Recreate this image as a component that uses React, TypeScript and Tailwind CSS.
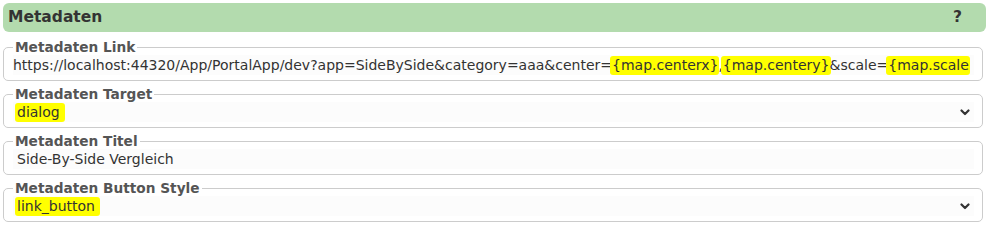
import React from "react";

const Hl = ({ children, wide }: { children: React.ReactNode; wide?: boolean }) => (
  <span className={`inline-block bg-[#ffff00] rounded-[3px] leading-[19px] pl-[2px] -ml-[2px] ${wide ? "pr-[5px]" : "pr-[1px] -mr-[1px]"}`}>{children}</span>
);

const Chevron = () => (
  <svg width="10" height="7" viewBox="0 0 10 7" className="shrink-0">
    <path d="M1.5 1.5 L5 5 L8.5 1.5" fill="none" stroke="#333" strokeWidth="2.2" strokeLinecap="round" strokeLinejoin="round" />
  </svg>
);

function Field({ label, children, select, first }: { label: string; children: React.ReactNode; select?: boolean; first?: boolean }) {
  return (
    <fieldset className={`${first ? "mt-[7px]" : "mt-[5px]"} border border-[#cccccc] rounded-[5px] pl-[9px] pr-[8px] pb-[5px] min-w-0`}>
      <legend className="px-[2px] text-[13.7px] font-bold text-[#555555] leading-[16px]">{label}</legend>
      <div className="flex items-center h-[20px] bg-[#fcfcfc] overflow-hidden whitespace-nowrap text-[14px] text-[#333333] leading-[20px]">
        <div className={`flex-1 min-w-0 overflow-hidden ${first ? "pl-0" : "pl-[4px]"}`}>{children}</div>
        {select && (
          <div className="pr-[4px]">
            <Chevron />
          </div>
        )}
      </div>
    </fieldset>
  );
}

export default function App() {
  return (
    <div className="w-[989px] h-[227px] bg-white px-[3px] pt-[3px]" style={{ fontFamily: '"DejaVu Sans", Verdana, sans-serif' }}>
      <div className="h-[29px] rounded-[6px] bg-[#b3dbae] flex items-center justify-between pl-[5px] pr-[24px]">
        <span className="text-[15.5px] font-bold text-[#333333]">Metadaten</span>
        <span className="text-[15.5px] font-bold text-[#333333]">?</span>
      </div>
      <div className="pr-[3px]">
        <Field label="Metadaten Link" first>
          https://localhost:44320/App/PortalApp/dev?app=SideBySide&amp;category=aaa&amp;center=<Hl>{"{map.centerx}"}</Hl>,<Hl>{"{map.centery}"}</Hl>&amp;scale=<Hl>{"{map.scale"}</Hl>
        </Field>
        <Field label="Metadaten Target" select>
          <Hl wide>dialog</Hl>
        </Field>
        <Field label="Metadaten Titel">Side-By-Side Vergleich</Field>
        <Field label="Metadaten Button Style" select>
          <Hl wide>link_button</Hl>
        </Field>
      </div>
    </div>
  );
}
